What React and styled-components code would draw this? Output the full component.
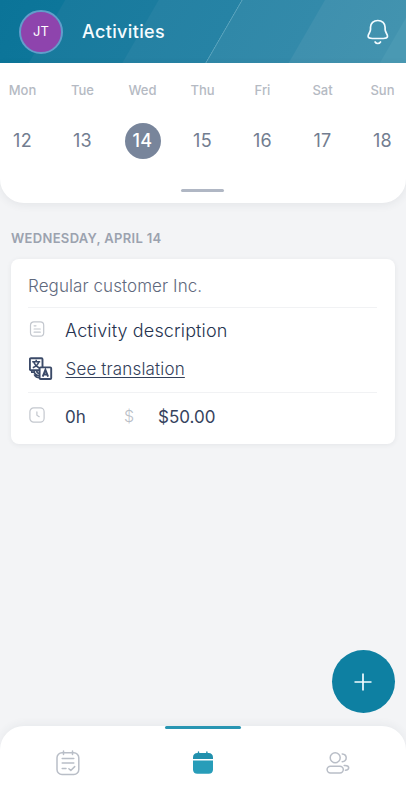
import React, { useState } from 'react';
import styled, { createGlobalStyle } from 'styled-components';

const DAYS = [
  { name: 'Mon', date: 12 },
  { name: 'Tue', date: 13 },
  { name: 'Wed', date: 14 },
  { name: 'Thu', date: 15 },
  { name: 'Fri', date: 16 },
  { name: 'Sat', date: 17 },
  { name: 'Sun', date: 18 }
];

const BellIcon = () => (
  <svg width="24" height="28" viewBox="0 0 24 28" fill="none" stroke="#f2fbff" strokeWidth="1.7" strokeLinecap="round">
    <path d="M11.800 2.500C7.500 2.500 4.500 5.400 4.500 9.300v2.300c0 1.300-.6 2.400-1.300 3.600-.9 1.500-1.500 2.500-1.100 3.600.5 1.300 2.100 1.700 4.200 1.700h11c2.100 0 3.700-.4 4.200-1.700.4-1.100-.2-2.100-1.100-3.600-.7-1.200-1.300-2.300-1.300-3.600V9.300c0-3.900-3-6.800-7.300-6.800z" />
    <path d="M9.100 24c.6 1 1.500 1.500 2.700 1.500s2.100-.5 2.700-1.500" />
  </svg>
);

const NoteIcon = () => (
  <svg width="16" height="16" viewBox="0 0 16 16" fill="none" stroke="#c3c7ce" strokeLinecap="round">
    <rect x="1.500" y="0.900" width="13.200" height="14.200" rx="3.400" strokeWidth="1.200" />
    <path d="M5.100 4.800H7M5.100 8h6.200M5.100 11.200h6.200" strokeWidth="1.200" />
  </svg>
);

const ClockIcon = () => (
  <svg width="16" height="16" viewBox="0 0 16 16" fill="none" stroke="#c3c7ce" strokeLinecap="round">
    <rect x="0.900" y="0.900" width="14.200" height="14.200" rx="3.800" strokeWidth="1.200" />
    <path d="M7.900 4.900v3.300l2.300 1.500" strokeWidth="1.200" />
  </svg>
);

const TranslateIcon = () => (
  <svg width="24" height="24" viewBox="0 0 24 24" fill="none" stroke="#3b4a68">
    <rect x="0.900" y="1.200" width="12.600" height="12" rx="1" strokeWidth="1.900" />
    <path d="M3.200 4.800h8M7.200 2.800v2M9.800 4.800c-.8 2.900-2.900 4.800-6 6M4.800 5.200c1 2.700 3 4.500 5.600 5.800" strokeWidth="1.500" />
    <path d="M2.800 13.300v2h2.500M5 13.500c0 3 1.800 4.800 5.500 5.300M7.700 13.800c.2 1.600 1.200 2.600 2.900 2.700M5.200 17.300c1.200 2.400 3 3.400 5.500 3.400" strokeWidth="1.600" />
    <rect x="10.600" y="10.400" width="11.600" height="11.600" rx="1" fill="#fff" strokeWidth="1.900" />
    <path d="M13.700 19.700l2.700-6.800 2.700 6.800M14.600 17.500h3.600" strokeWidth="1.900" />
  </svg>
);

const TasksIcon = () => (
  <svg width="24" height="26" viewBox="0 0 24 26" fill="none" stroke="#b9bec7" strokeWidth="1.500" strokeLinecap="round" strokeLinejoin="round">
    <rect x="1" y="2.700" width="21.800" height="21.800" rx="5" />
    <path d="M7.500 1v3.600M16.500 1v3.600M6.200 8.500h11.600M6.200 13.100h11.600M6.200 18.500H10M12.900 18.800l1.900 1.700 3.900-3.900" />
  </svg>
);

const CalendarIcon = () => (
  <svg width="22" height="24" viewBox="0 0 22 24">
    <path d="M6.500 1v2.500M14.900 1v2.500" stroke="#2190ad" strokeWidth="1.400" strokeLinecap="round" />
    <path d="M5.400 2h11.200c2.700 0 4.400 1.600 4.400 4.400V8H1V6.400C1 3.600 2.700 2 5.400 2z" fill="#2190ad" />
    <path d="M1 9.600h20v8.800c0 2.800-1.700 4.400-4.400 4.400H5.400C2.700 22.800 1 21.200 1 18.400z" fill="#289db9" />
  </svg>
);

const PeopleIcon = () => (
  <svg width="24" height="24" viewBox="0 0 24 24" fill="none" stroke="#b9bec7" strokeWidth="1.500" strokeLinecap="round">
    <circle cx="9.200" cy="6.800" r="5" />
    <path d="M16.200 2.900c2.400.2 4 1.700 4 3.900s-1.600 3.800-4 4" />
    <rect x="1.100" y="15.200" width="16.200" height="6.800" rx="3.400" />
    <path d="M18.200 14.500h.8c2.200 0 3.700.9 3.700 2.300s-1.300 2.300-3.300 2.400" />
  </svg>
);

const App = () => {
  const [selected, setSelected] = useState(14);

  return (
    <Screen>
      <GlobalStyle />
      <Header>
        <Avatar>JT</Avatar>
        <Title>Activities</Title>
        <IconButton aria-label="Notifications">
          <BellIcon />
        </IconButton>
      </Header>
      <Calendar>
        <Week>
          {DAYS.map(day => (
            <Day key={day.date} onClick={() => setSelected(day.date)}>
              <DayName>{day.name}</DayName>
              <DayNumber $active={selected === day.date}>{day.date}</DayNumber>
            </Day>
          ))}
        </Week>
        <Handle />
      </Calendar>
      <Content>
        <DateHeading>Wednesday, April 14</DateHeading>
        <Card>
          <Customer>Regular customer Inc.</Customer>
          <Details>
            <Row>
              <IconCell $raised>
                <NoteIcon />
              </IconCell>
              <Description>Activity description</Description>
            </Row>
            <Row>
              <IconCell>
                <TranslateIcon />
              </IconCell>
              <TranslationLink href="#">See translation</TranslationLink>
            </Row>
          </Details>
          <Totals>
            <IconCell $raised>
              <ClockIcon />
            </IconCell>
            <Hours>0h</Hours>
            <Dollar>$</Dollar>
            <Amount>$50.00</Amount>
          </Totals>
        </Card>
      </Content>
      <AddButton aria-label="Add activity">
        <svg width="18" height="18" viewBox="0 0 18 18" stroke="#f2fbff" strokeWidth="1.700">
          <path d="M9 .5v17M.5 9h17" />
        </svg>
      </AddButton>
      <Nav>
        <Tab>
          <TasksIcon />
        </Tab>
        <Tab $active>
          <CalendarIcon />
        </Tab>
        <Tab>
          <PeopleIcon />
        </Tab>
      </Nav>
    </Screen>
  );
};

const GlobalStyle = createGlobalStyle`
  * {
    box-sizing: border-box;
  }
  body {
    margin: 0;
    font-family: Inter, 'Liberation Sans', sans-serif;
  }
  button {
    border: 0;
    padding: 0;
    background: none;
    font: inherit;
  }
  svg {
    display: block;
  }
`;

const Screen = styled.div`
  position: relative;
  width: 100%;
  height: 800px;
  display: flex;
  flex-direction: column;
  background: #f3f4f6;
  overflow: hidden;
`;

const Header = styled.header`
  height: 63px;
  flex: none;
  display: flex;
  align-items: center;
  padding: 0 16px 0 19px;
  background: linear-gradient(
    120deg,
    #0b7498 0,
    #0d769a 56px,
    #187a9d 57px,
    #1b7c9f 137px,
    #2581a3 138px,
    #2683a5 209px,
    #5ba3bd 209.5px,
    #4f9db8 210px,
    #3088a8 210.5px,
    #338aaa 281px,
    #3f90ae 282px,
    #4293af 360px,
    #4a99b3 361px
  );
`;

const Avatar = styled.div`
  width: 44px;
  height: 44px;
  border-radius: 50%;
  border: 2px solid #629dcb;
  background: #8e44ad;
  color: #fff;
  display: flex;
  align-items: center;
  justify-content: center;
  padding-bottom: 1px;
  font-size: 13px;
  letter-spacing: 0.2px;
`;

const Title = styled.h1`
  flex: 1;
  margin: 0 0 0 19px;
  color: #f5fcff;
  font-size: 18px;
  font-weight: 500;
  letter-spacing: 0.35px;
`;

const IconButton = styled.button`
  width: 24px;
  height: 28px;
`;

const Calendar = styled.section`
  height: 140px;
  flex: none;
  display: flex;
  flex-direction: column;
  align-items: center;
  background: #fff;
  border-radius: 0 0 24px 24px;
  box-shadow: 0 2px 8px rgba(50, 60, 80, 0.08);
  overflow: hidden;
`;

const Week = styled.div`
  width: 420px;
  flex: none;
  display: grid;
  grid-template-columns: repeat(7, 60px);
  padding-top: 18px;
  margin-left: -1px;
`;

const Day = styled.button`
  display: flex;
  flex-direction: column;
  align-items: center;
`;

const DayName = styled.span`
  height: 18px;
  line-height: 18px;
  font-size: 13px;
  font-weight: 500;
  color: #b5bac3;
`;

const DayNumber = styled.span`
  width: 36px;
  height: 36px;
  margin-top: 24px;
  border-radius: 50%;
  line-height: 36px;
  text-align: center;
  font-size: 18px;
  letter-spacing: 0.3px;
  font-weight: ${({ $active }) => ($active ? 500 : 400)};
  color: ${({ $active }) => ($active ? '#fff' : '#727d90')};
  background: ${({ $active }) => ($active ? '#78859b' : 'transparent')};
`;

const Handle = styled.div`
  width: 43px;
  height: 3px;
  margin: 30px 1px 0 0;
  border-radius: 2px;
  background: #b0b7c4;
`;

const Content = styled.main`
  flex: 1;
  padding: 27px 11px 0;
`;

const DateHeading = styled.h2`
  margin: 0 0 12px;
  height: 17px;
  line-height: 17px;
  font-size: 13px;
  font-weight: 600;
  letter-spacing: 0.32px;
  text-transform: uppercase;
  color: #9ba2af;
`;

const Card = styled.article`
  height: 185px;
  padding: 0 18px 0 17px;
  border-radius: 8px;
  background: #fff;
  box-shadow: 0 1px 5px rgba(50, 60, 80, 0.08);
`;

const Customer = styled.div`
  height: 49px;
  padding-top: 5px;
  line-height: 44px;
  border-bottom: 1px solid #f1f2f4;
  font-size: 17px;
  font-weight: 300;
  letter-spacing: 0.08px;
  color: #5f697d;
`;

const Details = styled.div`
  height: 85px;
  padding-top: 4px;
  border-bottom: 1px solid #f1f2f4;
`;

const Row = styled.div`
  height: 38px;
  display: flex;
  align-items: center;
`;

const IconCell = styled.div`
  width: 37px;
  flex: none;
  padding-left: 1px;
  padding-bottom: ${({ $raised }) => ($raised ? 4 : 1)}px;
`;

const Description = styled.span`
  padding-bottom: 1px;
  font-size: 18px;
  font-weight: 300;
  letter-spacing: 0.13px;
  color: #25334f;
`;

const TranslationLink = styled.a`
  margin-left: 0.500px;
  font-size: 17px;
  font-weight: 300;
  letter-spacing: 0.16px;
  color: #33405a;
  text-decoration: underline;
  text-decoration-thickness: 1px;
  text-underline-offset: 2px;
`;

const Totals = styled.div`
  height: 48px;
  display: flex;
  align-items: center;
  font-size: 17px;
  color: #36435e;
`;

const Hours = styled.span`
  width: 59px;
`;

const Dollar = styled.span`
  width: 34px;
  padding-bottom: 3px;
  font-size: 16px;
  font-weight: 300;
  color: #b9bec7;
`;

const Amount = styled.span`
  letter-spacing: 0;
`;

const AddButton = styled.button`
  position: absolute;
  right: 11.500px;
  bottom: 87px;
  width: 63px;
  height: 63px;
  border-radius: 50%;
  display: flex;
  align-items: center;
  justify-content: center;
  background: #0e80a2;
`;

const Nav = styled.nav`
  height: 74px;
  flex: none;
  display: grid;
  grid-template-columns: repeat(3, 1fr);
  background: #fff;
  border-radius: 24px 24px 0 0;
  box-shadow: 0 -2px 8px rgba(50, 60, 80, 0.06);
`;

const Tab = styled.button`
  position: relative;
  display: flex;
  align-items: center;
  justify-content: center;

  &::before {
    content: '';
    display: ${({ $active }) => ($active ? 'block' : 'none')};
    position: absolute;
    top: 0;
    width: 76px;
    height: 3px;
    border-radius: 2px;
    background: #2895b2;
  }
`;

export default App;
